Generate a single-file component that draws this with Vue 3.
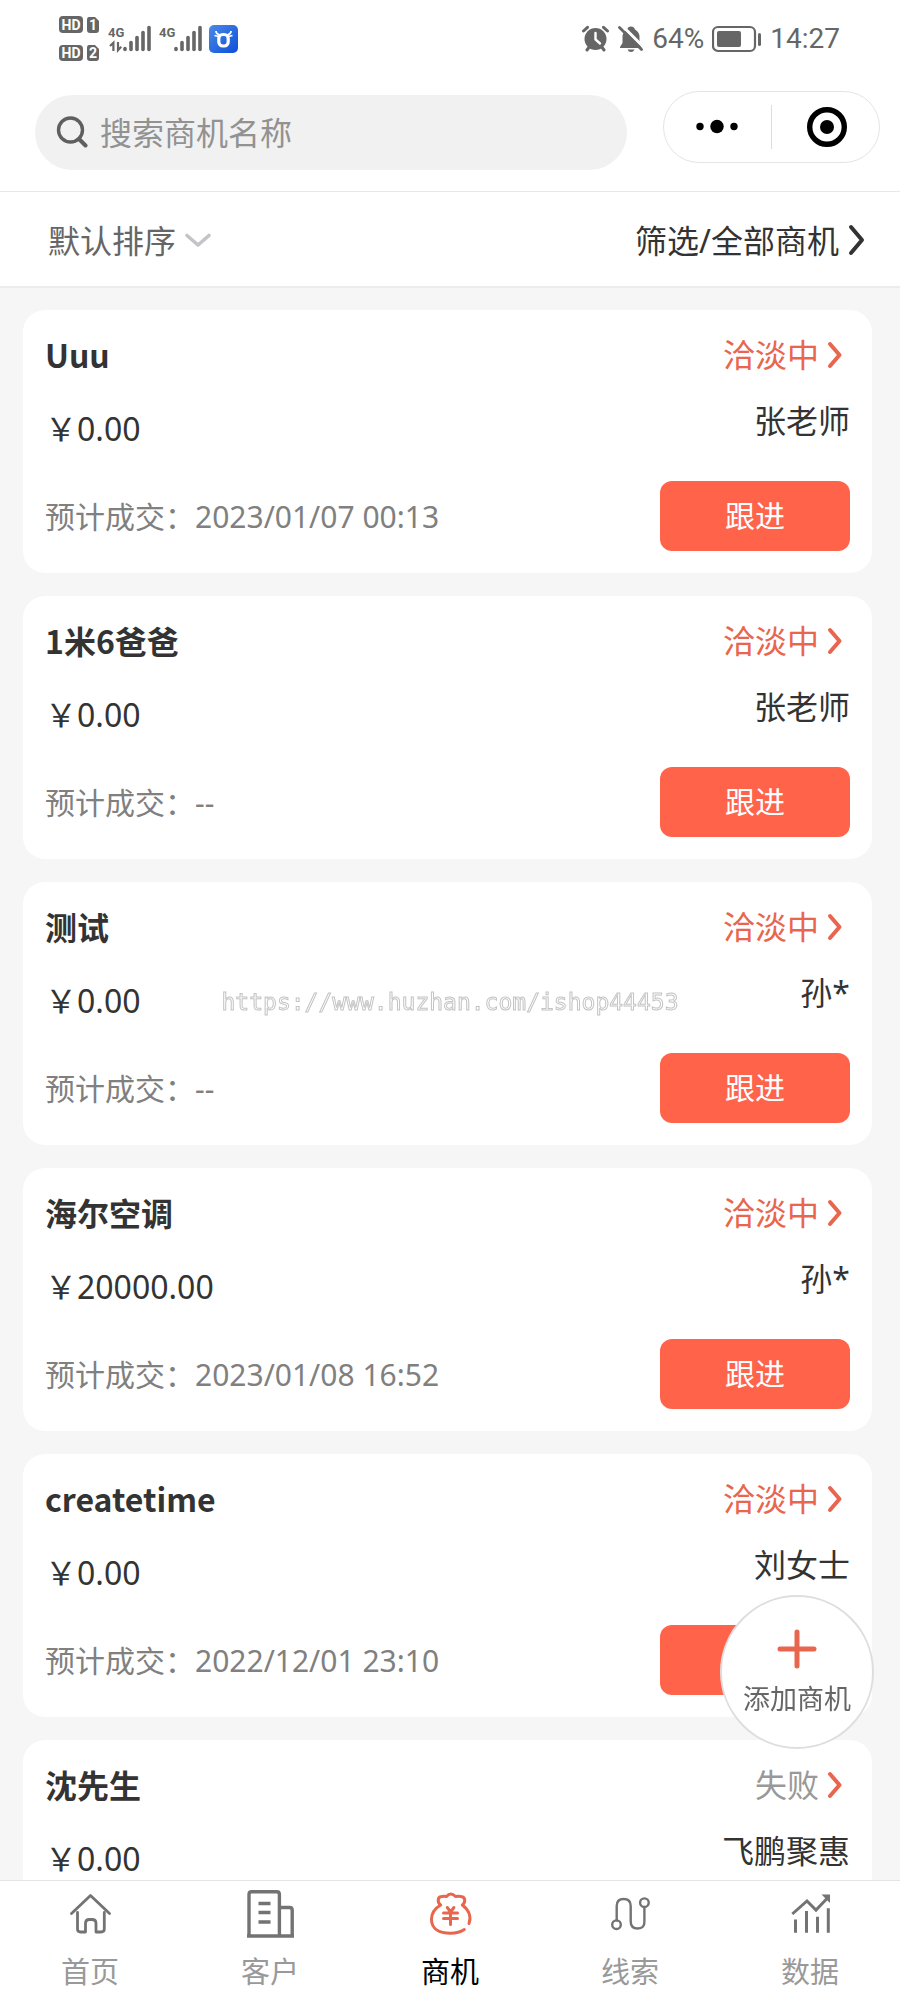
<script setup>
import { ref } from 'vue'

const keyword = ref('')
const sort = ref('default')

const deals = [
  { id: 1, name: 'Uuu', amount: '0.00', date: '2023/01/07 00:13', stage: '洽淡中', owner: '张老师' },
  { id: 2, name: '1米6爸爸', amount: '0.00', date: '--', stage: '洽淡中', owner: '张老师' },
  { id: 3, name: '测试', amount: '0.00', date: '--', stage: '洽淡中', owner: '孙*' },
  { id: 4, name: '海尔空调', amount: '20000.00', date: '2023/01/08 16:52', stage: '洽淡中', owner: '孙*' },
  { id: 5, name: 'createtime', amount: '0.00', date: '2022/12/01 23:10', stage: '洽淡中', owner: '刘女士' },
  { id: 6, name: '沈先生', amount: '0.00', stage: '失败', owner: '飞鹏聚惠', lost: true },
]

const signalBars = [
  { x: 0, top: 47 },
  { x: 6, top: 41 },
  { x: 12, top: 36 },
  { x: 18, top: 31 },
  { x: 24, top: 26 },
]
</script>

<template>
  <div class="screen">
    <header class="top">
      <div class="status-bar">
        <svg class="signals" width="182" height="78" viewBox="58 0 182 78" aria-hidden="true">
          <g fill="#666">
            <rect x="59" y="16" width="24" height="17" rx="4" />
            <rect x="59" y="45" width="24" height="16" rx="4" />
            <path d="M89 17h6l4 4v9q0 3-3 3h-6q-3 0-3-3v-10q0-3 2-3z" />
            <path d="M89 45h6l4 4v9q0 3-3 3h-6q-3 0-3-3v-10q0-3 2-3z" />
          </g>
          <g class="badge-text">
            <text x="71" y="30">HD</text>
            <text x="71" y="58">HD</text>
            <text x="93" y="30">1</text>
            <text x="93" y="58">2</text>
          </g>
          <g class="net-text">
            <text x="108" y="37">4G</text>
            <text x="159" y="37">4G</text>
          </g>
          <g stroke="#666" stroke-width="3.6" stroke-linecap="round">
            <template v-for="start in [125, 176]" :key="start">
              <line
                v-for="bar in signalBars"
                :key="bar.x"
                :x1="start + bar.x"
                :x2="start + bar.x"
                :y1="bar.top + 1.5"
                y2="49.4"
              />
            </template>
          </g>
          <path d="M110 46l3.4-3.2V51M118 42v8.2l3.2-3.4" fill="none" stroke="#666" stroke-width="2.2" />
          <defs>
            <linearGradient id="app-blue" x1="0" y1="0" x2="1" y2="1">
              <stop offset="0" stop-color="#4a8ae8" />
              <stop offset="1" stop-color="#0c4fd8" />
            </linearGradient>
          </defs>
          <rect x="209" y="25" width="29" height="28" rx="5" fill="url(#app-blue)" />
          <path
            d="M216 31q0 3 4 4M231 31q0 3-4 4M214.500 35.500l4 1M232.500 35.500l-4 1"
            fill="none"
            stroke="#fff"
            stroke-width="1.800"
          />
          <rect x="218.800" y="34.500" width="9.400" height="11.500" rx="4" fill="none" stroke="#fff" stroke-width="3.2" />
        </svg>
        <div class="device">
          <svg width="28" height="28" viewBox="0 0 28 28" aria-hidden="true">
            <circle cx="13.5" cy="14" r="11" fill="#666" />
            <path
              d="M1.5 6l4-3.7M25.5 6l-4-3.7M5 25l3-4M22 25l-3-4"
              fill="none"
              stroke="#666"
              stroke-width="3"
              stroke-linecap="round"
            />
            <path
              d="M13.5 8v6.5l4.5 4"
              fill="none"
              stroke="#fff"
              stroke-width="2.4"
              stroke-linecap="round"
            />
          </svg>
          <svg width="26" height="28" viewBox="0 0 26 28" aria-hidden="true">
            <path
              d="M9 4.5q1-3 4-3t4 3q4.5 2.5 4.5 7.5v6l2 4v1H2v-1l2.5-4v-6q0-5 4.5-7.5z"
              fill="#666"
            />
            <path d="M9.5 24.5h7q-1 2.500-3.500 2.500t-3.500-2.500z" fill="#666" />
            <path d="M3.5 0L27 23.5" stroke="#fff" stroke-width="3" />
            <path d="M1.5 2.5L23.5 24.5" stroke="#666" stroke-width="2.8" stroke-linecap="round" />
          </svg>
          <span>64%</span>
          <svg width="50" height="28" viewBox="0 0 50 28" aria-hidden="true">
            <rect x="1" y="2" width="42" height="24" rx="5" fill="none" stroke="#666" stroke-width="2.2" />
            <rect x="5" y="6" width="24" height="16" rx="2" fill="#666" />
            <rect x="46" y="8" width="3" height="13" rx="1.5" fill="#666" />
          </svg>
          <time>14:27</time>
        </div>
      </div>

      <div class="search-row">
        <label class="search">
          <svg width="36" height="36" viewBox="0 0 36 36" aria-hidden="true">
            <circle cx="18.5" cy="15" r="12" fill="none" stroke="#5f5f5f" stroke-width="3.4" />
            <path d="M27 24l6.5 6.5" stroke="#5f5f5f" stroke-width="4" stroke-linecap="round" />
          </svg>
          <input v-model="keyword" type="search" placeholder="搜索商机名称" aria-label="搜索商机名称" />
        </label>
        <div class="capsule">
          <button type="button" aria-label="更多">
            <svg width="48" height="44" viewBox="0 0 48 44" aria-hidden="true">
              <circle cx="6" cy="21.5" r="3.7" />
              <circle cx="23" cy="21.5" r="6.7" />
              <circle cx="40" cy="21.5" r="3.7" />
            </svg>
          </button>
          <button type="button" aria-label="关闭">
            <svg width="44" height="44" viewBox="0 0 44 44" aria-hidden="true">
              <circle cx="23" cy="22" r="17.3" fill="none" stroke="#000" stroke-width="5.4" />
              <circle cx="23" cy="22" r="7" />
            </svg>
          </button>
        </div>
      </div>
    </header>

    <div class="filters">
      <label class="sort">
        <select v-model="sort" aria-label="排序">
          <option value="default">默认排序</option>
        </select>
        <svg width="28" height="28" viewBox="0 0 28 28" aria-hidden="true">
          <path
            d="M3 8.5l11 9.5 11-9.5"
            fill="none"
            stroke="#c3c3c8"
            stroke-width="3.6"
            stroke-linecap="round"
            stroke-linejoin="round"
          />
        </svg>
      </label>
      <button type="button" class="filter">
        筛选/全部商机
        <svg width="18" height="34" viewBox="0 0 18 34" aria-hidden="true">
          <path
            d="M3 3l11 13L3 29"
            fill="none"
            stroke="#333"
            stroke-width="4"
            stroke-linecap="round"
            stroke-linejoin="round"
          />
        </svg>
      </button>
    </div>

    <main class="list">
      <article v-for="deal in deals" :key="deal.id" class="card">
        <div class="info">
          <h2>{{ deal.name }}</h2>
          <p class="amount">￥{{ deal.amount }}</p>
          <p v-if="deal.date" class="date">预计成交：{{ deal.date }}</p>
        </div>
        <div class="side">
          <a href="#" class="stage" :class="{ lost: deal.lost }">
            {{ deal.stage }}
            <svg width="26" height="32" viewBox="0 0 26 32" aria-hidden="true">
              <path
                d="M6 5l9.5 11L6 27"
                fill="none"
                stroke="#e9664e"
                stroke-width="4"
                stroke-linecap="round"
                stroke-linejoin="round"
              />
            </svg>
          </a>
          <p class="owner">{{ deal.owner }}</p>
          <button v-if="!deal.lost" type="button" class="follow">跟进</button>
        </div>
      </article>
    </main>

    <nav class="tabs">
      <a href="#">
        <svg class="line" width="48" height="48" viewBox="0 0 48 48" stroke-width="2.8" aria-hidden="true">
          <path d="M5.5 23.5L24.5 5.5 43.5 23.5" />
          <path d="M11.5 22.5V39q0 3 3 3h5v-8.5q0-4 4-4h2.5q4 0 4 4V42h5q3.3 0 3.3-3V22.5" />
        </svg>
        首页
      </a>
      <a href="#">
        <svg class="line" width="48" height="48" viewBox="0 0 48 48" stroke-width="3.4" aria-hidden="true">
          <path
            d="M3 46V4.5q0-2.7 2.7-2.7h25q2.7 0 2.7 2.7V46M33.5 17.5H43.5q2.7 0 2.7 2.7V46M1 46h47M12.5 13.5h12M12.5 22.5h12M12.5 32h12"
            stroke-linecap="butt"
          />
        </svg>
        客户
      </a>
      <a href="#" class="active" aria-current="page">
        <svg width="48" height="48" viewBox="0 0 48 48" stroke-width="3" aria-hidden="true">
          <path
            d="M38.3 39.6Q33 43.3 24.5 43.3C13 43.3 5.5 38.5 5.5 29.5C5.5 23 9.5 18 14.7 15C11.5 13 11 7 15.5 6.5Q18.5 6 20.5 6.5Q24.7 1.5 29.5 6.5Q32 6 35 6.5C40 7 39.5 13 36.3 15C43 20 45.5 27 43 33.5"
          />
          <path d="M21.3 17.5l3.3 4.5 3.3-4.5M17.5 23h14M17.5 28.5h14M24.5 23v11.5" />
        </svg>
        商机
      </a>
      <a href="#">
        <svg class="line" width="48" height="48" viewBox="0 0 48 48" stroke-width="2.4" aria-hidden="true">
          <circle cx="10.5" cy="34.7" r="4.3" />
          <circle cx="38.4" cy="12.7" r="4.3" />
          <path d="M10.7 30.4V16q0-7 7-7t7 7v15.5q0 7 7 7t6.700-7V17" />
        </svg>
        线索
      </a>
      <a href="#">
        <svg class="line" width="48" height="48" viewBox="0 0 48 48" stroke-width="3" aria-hidden="true">
          <path
            d="M9.5 29.5v13.3M20.5 21v21.8M31.5 26.7v16.1M42.3 18.3v24.5M6.3 24L21 11l9 9L41 8.5"
            stroke-linecap="butt"
            stroke-linejoin="miter"
          />
          <path d="M35.5 4.5H44v8.5z" fill="#737373" stroke="none" />
        </svg>
        数据
      </a>
    </nav>

    <button type="button" class="add">
      <svg width="40" height="40" viewBox="0 0 40 40" aria-hidden="true">
        <path d="M3 20h34M20 3v34" stroke="#e9664e" stroke-width="5" stroke-linecap="round" />
      </svg>
      添加商机
    </button>

    <div class="watermark" aria-hidden="true">https://www.huzhan.com/ishop44453</div>
  </div>
</template>

<style>
body {
  margin: 0;
  background: #f6f6f6;
}
</style>

<style scoped>
.screen {
  display: flex;
  flex-direction: column;
  height: 100vh;
  overflow: hidden;
  background: #f6f6f6;
  color: #333;
  font-family: "Noto Sans", "Noto Sans CJK SC", sans-serif;
  font-size: 32px;
  line-height: 46px;
}

button,
input,
select {
  margin: 0;
  padding: 0;
  border: 0;
  background: none;
  color: inherit;
  font: inherit;
}

button {
  cursor: pointer;
}

a {
  color: inherit;
  text-decoration: none;
}

h2,
p {
  margin: 0;
}

svg {
  display: block;
  flex: none;
}

.top {
  flex: none;
  background: #fff;
  border-bottom: 1px solid #e8e8e8;
}

.status-bar {
  display: flex;
  justify-content: space-between;
  height: 78px;
  padding: 0 60px 0 58px;
}

.badge-text {
  fill: #fff;
  font: 700 14px Roboto, sans-serif;
  text-anchor: middle;
}

.net-text {
  fill: #666;
  font: 700 13px Roboto, sans-serif;
}

.device {
  display: flex;
  align-items: center;
  gap: 8px;
  color: #666;
  font-family: Roboto, sans-serif;
  font-size: 28px;
}

.search-row {
  display: flex;
  align-items: flex-start;
  gap: 36px;
  padding: 13px 20px 21px 35px;
}

.search {
  display: flex;
  flex: 1;
  align-items: center;
  gap: 12px;
  min-width: 0;
  height: 75px;
  margin-top: 4px;
  padding: 0 24px 0 17px;
  box-sizing: border-box;
  border-radius: 38px;
  background: #f1f1f1;
}

.search input {
  flex: 1;
  min-width: 0;
  outline: 0;
  appearance: none;
}

.search input::placeholder {
  color: #929292;
  opacity: 1;
}

.capsule {
  display: flex;
  align-items: center;
  width: 217px;
  height: 72px;
  box-sizing: border-box;
  border: 1px solid #e4e4e4;
  border-radius: 36px;
}

.capsule button {
  display: flex;
  flex: 1;
  justify-content: center;
}

.capsule button + button {
  border-left: 1px solid #dcdcdc;
}

.filters {
  display: flex;
  flex: none;
  align-items: center;
  justify-content: space-between;
  padding: 26px 34px 22px 48px;
  border-bottom: 2px solid #ececec;
  background: #fff;
}

.sort {
  display: flex;
  align-items: center;
  gap: 7px;
  color: #666;
}

.sort select {
  appearance: none;
}

.filter {
  display: flex;
  align-items: center;
  gap: 9px;
}

.list {
  display: flex;
  flex: 1;
  flex-direction: column;
  gap: 23px;
  min-height: 0;
  padding: 22px 28px 22px 23px;
  overflow-y: auto;
  scrollbar-width: none;
}

.card {
  display: flex;
  flex: none;
  justify-content: space-between;
  padding: 22px;
  border-radius: 22px;
  background: #fff;
}

.card h2 {
  font-family: "Noto Sans CJK SC", sans-serif;
  font-size: 32px;
  font-weight: 700;
  line-height: 44px;
}

.amount {
  margin-top: 30px;
}

.date {
  margin-top: 42px;
  color: #808080;
  font-size: 30px;
}

.side {
  display: flex;
  flex-direction: column;
  align-items: flex-end;
}

.stage {
  display: flex;
  align-items: center;
  gap: 5px;
  color: #e9664e;
}

.stage.lost {
  color: #999;
}

.owner {
  margin-top: 20px;
}

.follow {
  width: 190px;
  height: 70px;
  margin-top: 37px;
  border-radius: 12px;
  background: #ff644b;
  color: #fff;
  font-size: 30px;
}

.tabs {
  display: flex;
  flex: none;
  padding: 9px 0 6px;
  border-top: 1px solid #e4e4e4;
  background: #fff;
}

.tabs a {
  display: flex;
  flex: 1;
  flex-direction: column;
  align-items: center;
  gap: 12px;
  color: #999;
  font-size: 29px;
  line-height: 44px;
}

.tabs a.active {
  color: #000;
}

.tabs svg {
  fill: none;
  stroke: #e9664e;
  stroke-linecap: round;
  stroke-linejoin: round;
}

.tabs svg.line {
  stroke: #737373;
}

.add {
  position: fixed;
  right: 26px;
  bottom: 251px;
  display: flex;
  flex-direction: column;
  align-items: center;
  justify-content: center;
  gap: 10px;
  width: 154px;
  height: 154px;
  padding-top: 4px;
  border: 2px solid #dedede;
  border-radius: 50%;
  background: #fff;
  color: #666;
  font-size: 27px;
  line-height: 40px;
}

.watermark {
  position: fixed;
  inset: 0;
  display: grid;
  place-items: center;
  padding-top: 4px;
  color: #fff;
  font-family: "DejaVu Sans Mono", monospace;
  font-size: 23px;
  pointer-events: none;
  -webkit-text-stroke: 1px #c4c4c4;
}
</style>
